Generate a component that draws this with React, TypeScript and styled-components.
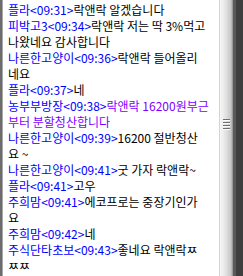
import React from "react";
import styled, { createGlobalStyle } from "styled-components";

const GlobalStyle = createGlobalStyle`
  html, body {
    margin: 0;
    padding: 0;
    background: #ffffff;
  }
  body {
    font-family: "Noto Sans CJK KR", "Noto Sans", sans-serif;
  }
`;

const Frame = styled.div`
  display: flex;
  width: 243px;
  height: 276px;
  overflow: hidden;
`;

const LeftEdge = styled.div`
  width: 3px;
  flex: none;
  background: linear-gradient(to right, #6c6c6c 0, #6c6c6c 2px, #a8a8a8 2px, #a8a8a8 3px);
`;

const ChatArea = styled.div`
  flex: 1;
  min-width: 0;
  background: #ffffff;
  overflow: hidden;
  padding-left: 5px;
`;

const MessageList = styled.div`
  padding-top: 2px;
`;

const Line = styled.div`
  height: 16px;
  line-height: 16px;
  font-size: 12px;
  white-space: nowrap;
  color: #000000;
`;

const Sender = styled.span`
  color: #0000ff;
`;

const Body = styled.span<{ $tone: string }>`
  color: ${(p) => p.$tone};
`;

const ScrollThumb = styled.div`
  width: 14px;
  flex: none;
  display: flex;
  flex-direction: column;
  align-items: center;
  padding-top: 119px;
  box-sizing: border-box;
  background: linear-gradient(
    to right,
    #d4d4d4 0,
    #d4d4d4 1px,
    #f6f6f6 1px,
    #eeeeee 4px,
    #dcdcdc 8px,
    #c6c6c6 12px,
    #a9a9a9 13px,
    #8a8a8a 14px
  );
`;

const Grip = styled.div`
  display: flex;
  flex-direction: column;
  gap: 1px;
  margin-left: 1px;
`;

const GripLine = styled.div`
  width: 7px;
  height: 1px;
  background: #6e6e6e;
  border-bottom: 1px solid #fbfbfb;
`;

const RightEdge = styled.div`
  width: 10px;
  flex: none;
  background: linear-gradient(to right, #5a5a5a 0, #5a5a5a 3px, #3e3e3e 3px, #3e3e3e 100%);
`;

type Message = {
  name: string;
  time: string;
  lines: string[];
  tone?: string;
};

const messages: Message[] = [
  { name: "플라", time: "09:31", lines: ["락앤락 알겠습니다"] },
  { name: "피박고3", time: "09:34", lines: ["락앤락 저는 딱 3%먹고", "나왔네요 감사합니다"] },
  { name: "나른한고양이", time: "09:36", lines: ["락앤락 들어올리", "네요"] },
  { name: "플라", time: "09:37", lines: ["네"] },
  {
    name: "농부부방장",
    time: "09:38",
    lines: ["락앤락 16200원부근", "부터 분할청산합니다"],
    tone: "#8000ff",
  },
  { name: "나른한고양이", time: "09:39", lines: ["16200 절반청산", "요 ~"] },
  { name: "나른한고양이", time: "09:41", lines: ["굿 가자 락앤락~"] },
  { name: "플라", time: "09:41", lines: ["고우"] },
  { name: "주희맘", time: "09:41", lines: ["에코프로는 중장기인가", "요"] },
  { name: "주희맘", time: "09:42", lines: ["네"] },
  { name: "주식단타초보", time: "09:43", lines: ["좋네요 락앤락ㅉ", "ㅉㅉ"] },
];

export default function App() {
  return (
    <>
      <GlobalStyle />
      <Frame>
        <LeftEdge />
        <ChatArea>
          <MessageList>
            {messages.map((m, i) =>
              m.lines.map((text, j) => (
                <Line key={`${i}-${j}`}>
                  {j === 0 && (
                    <Sender>
                      {m.name}&lt;{m.time}&gt;
                    </Sender>
                  )}
                  <Body $tone={m.tone ?? "#000000"}>{text}</Body>
                </Line>
              ))
            )}
          </MessageList>
        </ChatArea>
        <ScrollThumb>
          <Grip>
            <GripLine />
            <GripLine />
            <GripLine />
            <GripLine />
          </Grip>
        </ScrollThumb>
        <RightEdge />
      </Frame>
    </>
  );
}
